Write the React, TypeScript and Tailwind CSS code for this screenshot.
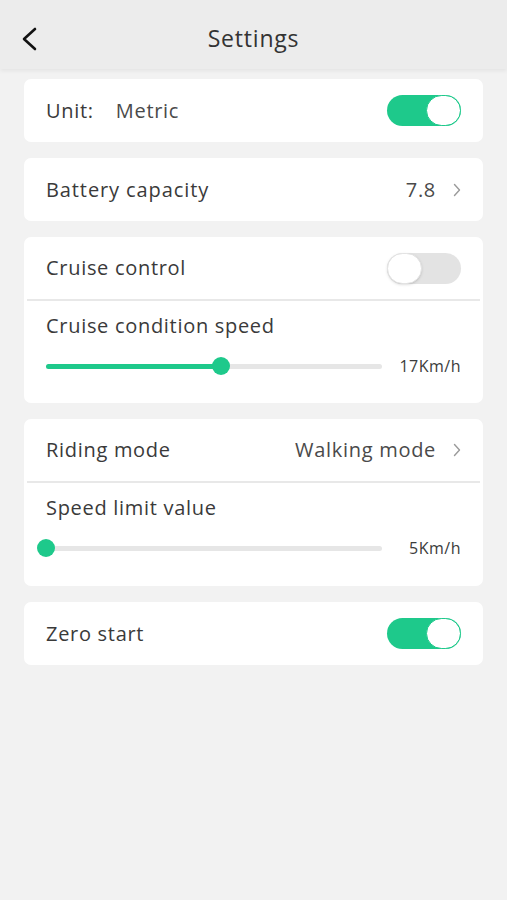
import React from "react";

const Toggle = ({ on }: { on: boolean }) => (
  <div
    className={`relative h-[31px] w-[74px] rounded-full ${
      on ? "bg-[#1ec98b]" : "bg-[#e3e3e3]"
    }`}
  >
    <div
      className={`absolute top-0 h-[31px] w-[35px] rounded-full bg-white ${
        on ? "right-0 border border-[#1ec98b]" : "left-0 border border-[#e3e3e3] shadow-sm"
      }`}
    />
  </div>
);

const Chevron = () => (
  <svg width="8" height="14" viewBox="0 0 8 14" className="ml-[17px]">
    <path d="M1.5 1.5 L6.5 7 L1.5 12.5" fill="none" stroke="#9a9a9a" strokeWidth="1.4" strokeLinecap="round" strokeLinejoin="round" />
  </svg>
);

const Slider = ({ pct, value }: { pct: number; value: string }) => (
  <div className="flex items-center px-[22px]">
    <div className="relative h-[5px] flex-1 rounded-full bg-[#e6e6e6]">
      <div className="absolute left-0 top-0 h-[5px] rounded-full bg-[#1ec98b]" style={{ width: `${pct}%` }} />
      <div
        className="absolute top-1/2 h-[18px] w-[18px] -translate-x-1/2 -translate-y-1/2 rounded-full bg-[#1ec98b]"
        style={{ left: `${pct}%` }}
      />
    </div>
    <span className="w-[79px] text-right text-[16px] tracking-[0.5px] text-[#3c3c3c]">{value}</span>
  </div>
);

const Divider = () => <div className="mx-[3px] h-[2px] bg-[#e8e8e8]" />;

export default function App() {
  return (
    <div className="min-h-[900px] w-full bg-[#f2f2f2] font-['Open_Sans','Noto_Sans',sans-serif] tracking-[0.7px]">
      <div className="relative flex h-[69px] items-center justify-center bg-[#ececec] pt-[8px] shadow-[0_2px_4px_rgba(0,0,0,0.06)]">
        <svg width="18" height="24" viewBox="0 0 18 24" className="absolute left-[20px] top-[27px]">
          <path d="M15 2 L4 12 L15 22" fill="none" stroke="#111" strokeWidth="2.6" strokeLinecap="round" strokeLinejoin="round" />
        </svg>
        <h1 className="text-[23px] tracking-[0.8px] text-[#333]">Settings</h1>
      </div>

      <div className="flex flex-col gap-[16px] px-[24px] pt-[10px]">
        <div className="flex h-[63px] items-center justify-between rounded-[7px] bg-white px-[22px]">
          <div className="flex items-center text-[20px] text-[#3a3a3a]">
            <span>Unit:</span>
            <span className="ml-[22px] text-[#4a4a4a]">Metric</span>
          </div>
          <Toggle on />
        </div>

        <div className="flex h-[63px] items-center justify-between rounded-[7px] bg-white px-[22px]">
          <span className="text-[20px] tracking-[0.9px] text-[#3a3a3a]">Battery capacity</span>
          <div className="flex items-center">
            <span className="text-[20px] text-[#4a4a4a]">7.8</span>
            <Chevron />
          </div>
        </div>

        <div className="flex flex-col rounded-[7px] bg-white">
          <div className="flex h-[62px] items-center justify-between px-[22px]">
            <span className="text-[20px] text-[#3a3a3a]">Cruise control</span>
            <Toggle on={false} />
          </div>
          <Divider />
          <div className="pl-[22px] pt-[10px] text-[20px] text-[#3a3a3a]">Cruise condition speed</div>
          <div className="pb-[25px] pt-[13px]">
            <Slider pct={52} value="17Km/h" />
          </div>
        </div>

        <div className="flex flex-col rounded-[7px] bg-white">
          <div className="flex h-[62px] items-center justify-between px-[22px]">
            <span className="text-[20px] text-[#3a3a3a]">Riding mode</span>
            <div className="flex items-center">
              <span className="text-[20px] text-[#4a4a4a]">Walking mode</span>
              <Chevron />
            </div>
          </div>
          <Divider />
          <div className="pl-[22px] pt-[10px] text-[20px] text-[#3a3a3a]">Speed limit value</div>
          <div className="pb-[26px] pt-[13px]">
            <Slider pct={0} value="5Km/h" />
          </div>
        </div>

        <div className="flex h-[63px] items-center justify-between rounded-[7px] bg-white px-[22px]">
          <span className="text-[20px] text-[#3a3a3a]">Zero start</span>
          <Toggle on />
        </div>
      </div>
    </div>
  );
}
